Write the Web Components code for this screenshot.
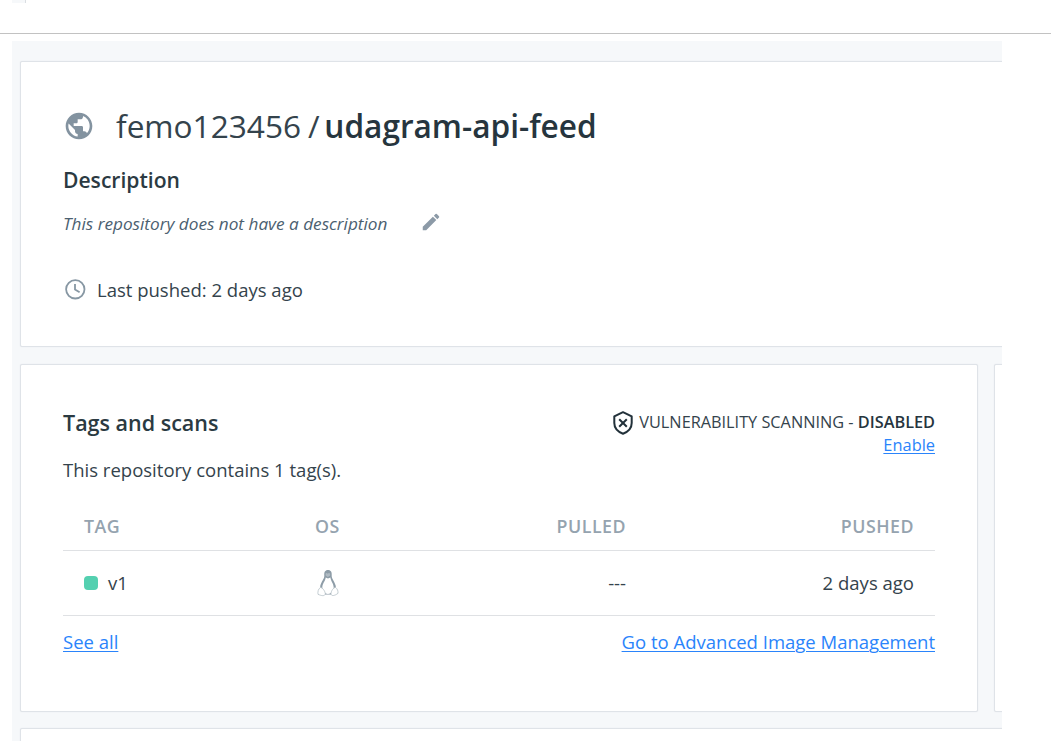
<!DOCTYPE html>
<html lang="en"><head><meta charset="utf-8"><title>udagram-api-feed</title>
<style>
html,body{margin:0;height:100%;overflow:hidden;background:#fff}
body{font-family:"Open Sans","Noto Sans",sans-serif;color:#34434c}
</style></head><body>
<hub-page></hub-page>
<script>
const define=(name,html)=>customElements.define(name,class extends HTMLElement{
  constructor(){super();this.attachShadow({mode:'open'}).innerHTML=html;}
});
define('hub-card',`<style>:host{display:block;box-sizing:border-box;background:#fff;border:1px solid #dfe3e8;border-radius:2px;box-shadow:0 0 1px #dde1e6}</style><slot></slot>`);
define('globe-icon',`<style>:host{display:block;width:32px;height:32px}svg{display:block}</style>
<svg width="32" height="32" viewBox="0 0 24 24" fill="#8393a0"><path d="M12 2C6.48 2 2 6.48 2 12s4.48 10 10 10 10-4.48 10-10S17.52 2 12 2zm-1 17.93c-3.95-.49-7-3.85-7-7.93 0-.62.08-1.21.21-1.79L9 15v1c0 1.1.9 2 2 2v1.93zm6.900-2.540c-.26-.81-1-1.390-1.900-1.390h-1v-3c0-.55-.45-1-1-1H8v-2h2c.55 0 1-.45 1-1V7h2c1.100 0 2-.9 2-2v-.41c2.930 1.190 5 4.060 5 7.410 0 2.080-.8 3.970-2.100 5.390z"/></svg>`);
define('pencil-icon',`<style>:host{display:block}svg{display:block}</style>
<svg width="22" height="22" viewBox="0 0 24 24" fill="#8c9aa7"><path d="M3 17.250V21h3.750L17.810 9.940l-3.750-3.750L3 17.250zM20.710 7.040a1 1 0 0 0 0-1.410l-2.340-2.340a1 1 0 0 0-1.410 0l-1.830 1.830 3.750 3.750 1.830-1.830z"/></svg>`);
define('clock-icon',`<style>:host{display:block}svg{display:block}</style>
<svg width="22" height="22" viewBox="0 0 22 22" fill="none" stroke="#8797a3" stroke-width="1.8"><circle cx="11.300" cy="11.300" r="9.200"/><path d="M11 6V11.600L15.600 14.300"/></svg>`);
define('shield-icon',`<style>:host{display:block;white-space:normal}svg{display:block}</style>
<svg width="22" height="26" viewBox="0 0 22 26" fill="none" stroke="#22313a" stroke-width="2"><path d="M11 2.200L19.700 6.400V13C19.700 18 16 21.800 11 23.700C6 21.800 2.300 18 2.300 13V6.400Z" stroke-linejoin="round"/><path d="M7.200 9.200L14.800 16.800M14.800 9.200L7.200 16.800"/></svg>`);
define('linux-icon',`<style>:host{display:block}svg{display:block}</style>
<svg width="22" height="28" viewBox="0 0 22 28"><path d="M11 1C8 1 7 3.300 7.300 6.500C7.500 9.800 4.300 12.500 3.200 17L3.500 21.500L8 25.500H14L18.500 21.500L18.800 17C17.700 12.500 14.500 9.800 14.700 6.500C15 3.300 14 1 11 1Z" fill="#8d9ca7"/><path d="M8.600 4.500Q9.500 3.500 10.700 4.700Q12 3.500 13.200 4.700L13 6.800L10.800 8L8.700 6.600Z" fill="#b0bbc3"/><path d="M8.700 8.500L11 9.500L13.400 8.400C13.700 12 16.700 14.500 16.700 18.500C16.700 22 14 25 11 25S5.300 22 5.300 18.500C5.300 14.500 8.400 12 8.700 8.500Z" fill="#fff"/><path d="M3.400 18.500C5.500 18.400 8.300 22.500 8.300 24.800C8 27.500 4.200 26.800 1 25.300C.6 22.500 1.300 20 3.400 18.500ZM18.600 18.500C16.500 18.400 14 22 14 24.800C14.200 27.500 17.800 26.800 21 24.300C21.200 22 20.500 20 18.600 18.500Z" fill="#fff" stroke="#b5c0c7" stroke-width=".8"/></svg>`);
define('repo-header',`<style>
:host{display:block;padding:42px 42px 0}
.title{display:flex;align-items:center;height:44px}
.name{margin-left:21px;font-size:31.600px;white-space:pre;line-height:44px}
.sl{letter-spacing:-1.300px;margin-right:-.8px}
b{font-weight:600;color:#26353e}
h2{margin:18px 0 0;font-size:21.100px;line-height:28px;font-weight:600;color:#2b3a42}
.desc{display:flex;align-items:center;height:30px;margin-top:14px;font-size:17.180px;font-style:italic;color:#4b6070}
pencil-icon{margin:-3px 0 0 33px}
.push{display:flex;align-items:center;height:30px;margin-top:36px;font-size:18.530px}
clock-icon{margin:-1px 0 0 1px}
.push span{margin-left:11px}
</style><div class="title"><globe-icon></globe-icon><div class="name"><span>femo123456</span><span class="sl"> / </span><b>udagram-api-feed</b></div></div>
<h2>Description</h2>
<div class="desc"><span>This repository does not have a description</span><pencil-icon></pencil-icon></div>
<div class="push"><clock-icon></clock-icon><span>Last pushed: 2 days ago</span></div>`);
define('tags-table',`<style>
:host{display:block;font-size:18.530px}
.row{display:grid;grid-template-columns:231px 139px 1fr 288px;padding:0 21px;box-sizing:border-box;border-bottom:1px solid #dfe1e4;align-items:center}
.head{height:50px;color:#95a3af;font-weight:600;font-size:17.800px;letter-spacing:.5px}
.head span{margin-top:1px}
.body{height:65px}.r{text-align:right}
.body .r,.tag span{margin-top:-2px}
linux-icon{margin:-1px 0 0 2px}
.tag{display:flex;align-items:center;gap:10px}
i{width:14px;height:14px;border-radius:4px;background:#54d0b0}
</style><div class="row head"><span>TAG</span><span>OS</span><span class="r">PULLED</span><span class="r">PUSHED</span></div>
<div class="row body"><span class="tag"><i></i><span>v1</span></span><linux-icon></linux-icon><span class="r">---</span><span class="r">2 days ago</span></div>`);
define('tags-panel',`<style>
:host{display:block;padding:42px 42px 0}
.top{display:flex;justify-content:space-between;height:49px}
h2{margin:2px 0 0;font-size:21.500px;line-height:28px;font-weight:600;color:#2b3a42}
.scan{text-align:right}
.status{display:flex;align-items:center;height:32px;font-size:16.300px;white-space:pre}
.status span,.status b{margin-top:-2px}
.status shield-icon{margin-right:5px}
b{font-weight:600;color:#26353e}
a{color:#2a84fb;text-decoration:underline;text-underline-offset:2px;text-decoration-thickness:1px}
.scan a{display:block;font-size:16.400px;line-height:18px;margin-top:-3px}
.count{font-size:18.530px;line-height:28px;margin:0;}
tags-table{margin-top:17px}
.foot{display:flex;justify-content:space-between;margin-top:12px;font-size:18.500px;line-height:28px}
</style><div class="top"><h2>Tags and scans</h2><div class="scan"><div class="status"><shield-icon></shield-icon><span>VULNERABILITY SCANNING - </span><b>DISABLED</b></div><a>Enable</a></div></div>
<p class="count">This repository contains 1 tag(s).</p>
<tags-table></tags-table>
<div class="foot"><a>See all</a><a>Go to Advanced Image Management</a></div>`);
define('hub-page',`<style>
:host{display:block;height:741px;overflow:hidden}
.strip{display:flex;height:33px;border-bottom:1px solid #c2c2c2}
.strip div{width:13px;height:3px;margin-left:12px;background:#f6f8fa;border-right:1px solid #dadee2}
main{box-sizing:border-box;width:990px;height:700px;margin:7px 0 0 12px;padding:20px 0 0 8px;background:#f6f8fa;overflow:hidden}
.wide{width:1100px;height:286px}
.cols{display:flex;gap:16px;width:1500px;margin:17px 0 16px}
.cols>:first-child{width:958px;height:348px}
.cols>:last-child{width:300px}
</style><header class="strip"><div></div></header>
<main><hub-card class="wide"><repo-header></repo-header></hub-card>
<div class="cols"><hub-card><tags-panel></tags-panel></hub-card><hub-card></hub-card></div>
<hub-card class="wide"></hub-card></main>`);
</script></body></html>
